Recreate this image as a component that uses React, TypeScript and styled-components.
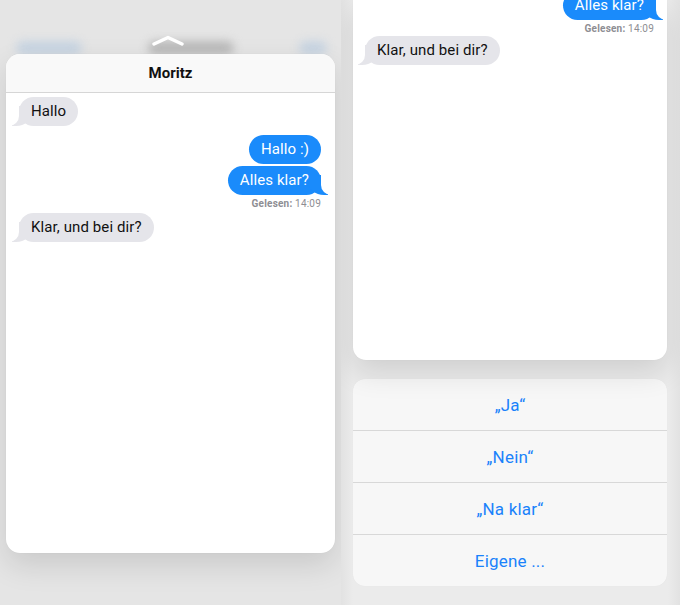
import React from "react";
import styled, { createGlobalStyle } from "styled-components";

const Global = createGlobalStyle`
  html, body { margin: 0; padding: 0; }
  body {
    width: 680px; height: 605px; overflow: hidden;
    font-family: "Roboto", "Liberation Sans", sans-serif;
    -webkit-font-smoothing: antialiased;
  }
`;

const Page = styled.div`
  display: grid;
  grid-template-columns: 341px 339px;
  height: 605px;
`;

const LeftPane = styled.div`
  background: #e5e5e5;
  display: flex;
  flex-direction: column;
  padding: 34px 6px 0 6px;
  overflow: hidden;
`;

const RightPane = styled.div`
  background: linear-gradient(90deg, #e2e2e2 0px, #ebebeb 12px, #ebebeb 327px, #e2e2e2 339px);
  display: flex;
  flex-direction: column;
  padding: 0 13px 0 12px;
  overflow: hidden;
`;

const Chevron = styled.svg`
  position: relative;
  z-index: 2;
  align-self: center;
  width: 34px;
  height: 12px;
  margin-left: -6px;
`;

const BlurRow = styled.div`
  display: flex;
  align-items: center;
  justify-content: space-between;
  height: 12px;
  margin: -4px 8px 0 10px;
`;

const Blob = styled.div<{ $w: number; $c: string }>`
  width: ${(p) => p.$w}px;
  height: 14px;
  border-radius: 7px;
  background: ${(p) => p.$c};
  filter: blur(5px);
`;

const Card = styled.div<{ $h: number; $top?: boolean }>`
  position: relative;
  height: ${(p) => p.$h}px;
  flex: none;
  background: #ffffff;
  border-radius: ${(p) => (p.$top ? "0 0 13px 13px" : "14px")};
  box-shadow: 0 12px 30px rgba(0, 0, 0, 0.12), 0 0 1px rgba(0, 0, 0, 0.08);
  overflow: hidden;
  display: flex;
  flex-direction: column;
`;

const Header = styled.div`
  height: 38px;
  flex: none;
  background: #f9f9f9;
  border-bottom: 1px solid #d6d6d6;
  display: flex;
  align-items: center;
  justify-content: center;
  font-weight: 700;
  font-size: 15px;
  color: #111;
`;

const Thread = styled.div<{ $pt: number; $pl: number; $pr: number }>`
  display: flex;
  flex-direction: column;
  padding: ${(p) => `${p.$pt}px ${p.$pr}px 0 ${p.$pl}px`};
`;

const Bubble = styled.div<{ $me?: boolean; $tail?: boolean; $mt?: number }>`
  position: relative;
  align-self: ${(p) => (p.$me ? "flex-end" : "flex-start")};
  margin-top: ${(p) => p.$mt ?? 0}px;
  height: 29px;
  line-height: 29px;
  padding: 0 12px;
  border-radius: 15px;
  font-size: 15px;
  letter-spacing: 0.1px;
  background: ${(p) => (p.$me ? "#1a8bfb" : "#e5e5ea")};
  color: ${(p) => (p.$me ? "#ffffff" : "#111111")};
  white-space: nowrap;

  ${(p) =>
    p.$tail &&
    (p.$me
      ? `
    &::before {
      content: "";
      position: absolute;
      bottom: 0; right: -7px;
      width: 20px; height: 20px;
      background: #1a8bfb;
      border-bottom-left-radius: 16px 14px;
    }
    &::after {
      content: "";
      position: absolute;
      bottom: 0; right: -10px;
      width: 10px; height: 20px;
      background: #ffffff;
      border-bottom-left-radius: 10px;
    }`
      : `
    &::before {
      content: "";
      position: absolute;
      bottom: 0; left: -7px;
      width: 20px; height: 20px;
      background: #e5e5ea;
      border-bottom-right-radius: 16px 14px;
    }
    &::after {
      content: "";
      position: absolute;
      bottom: 0; left: -10px;
      width: 10px; height: 20px;
      background: #ffffff;
      border-bottom-right-radius: 10px;
    }`)}
`;

const BubbleText = styled.span`
  position: relative;
  z-index: 1;
`;

const Receipt = styled.div<{ $mr: number }>`
  align-self: flex-end;
  margin: 3px ${(p) => p.$mr}px 0 0;
  font-size: 10px;
  color: #8e8e93;
  letter-spacing: 0.2px;
  b { font-weight: 700; }
`;

const Sheet = styled.div`
  margin-top: 19px;
  height: 207px;
  flex: none;
  background: #f7f7f7;
  border-radius: 12px;
  box-shadow: 0 0 1px rgba(0, 0, 0, 0.06);
  display: flex;
  flex-direction: column;
  overflow: hidden;
`;

const SheetRow = styled.div`
  flex: 1;
  display: flex;
  align-items: center;
  justify-content: center;
  font-size: 17px;
  color: #1a82fb;
  letter-spacing: 0.2px;
  & + & { border-top: 1px solid #d8d8d8; }
`;

export default function App() {
  return (
    <>
      <Global />
      <Page>
        <LeftPane>
          <Chevron viewBox="0 0 34 12">
            <path d="M3 10 L17 3.5 L31 10" fill="none" stroke="#ffffff" strokeWidth="3.4" strokeLinecap="round" strokeLinejoin="round" />
          </Chevron>
          <BlurRow>
            <Blob $w={66} $c="#c7d4e2" />
            <Blob $w={86} $c="#b9b9b9" />
            <Blob $w={28} $c="#c7d4e2" />
          </BlurRow>
          <Card $h={499}>
            <Header>Moritz</Header>
            <Thread $pt={4} $pl={13} $pr={14}>
              <Bubble $tail><BubbleText>Hallo</BubbleText></Bubble>
              <Bubble $me $mt={9}><BubbleText>Hallo :)</BubbleText></Bubble>
              <Bubble $me $tail $mt={2}><BubbleText>Alles klar?</BubbleText></Bubble>
              <Receipt $mr={0}><b>Gelesen:</b> 14:09</Receipt>
              <Bubble $tail $mt={4}><BubbleText>Klar, und bei dir?</BubbleText></Bubble>
            </Thread>
          </Card>
        </LeftPane>
        <RightPane>
          <Card $h={360} $top>
            <Thread $pt={0} $pl={12} $pr={11}>
              <Bubble $me $tail $mt={-9}><BubbleText>Alles klar?</BubbleText></Bubble>
              <Receipt $mr={2}><b>Gelesen:</b> 14:09</Receipt>
              <Bubble $tail $mt={2}><BubbleText>Klar, und bei dir?</BubbleText></Bubble>
            </Thread>
          </Card>
          <Sheet>
            <SheetRow>„Ja“</SheetRow>
            <SheetRow>„Nein“</SheetRow>
            <SheetRow>„Na klar“</SheetRow>
            <SheetRow>Eigene ...</SheetRow>
          </Sheet>
        </RightPane>
      </Page>
    </>
  );
}
